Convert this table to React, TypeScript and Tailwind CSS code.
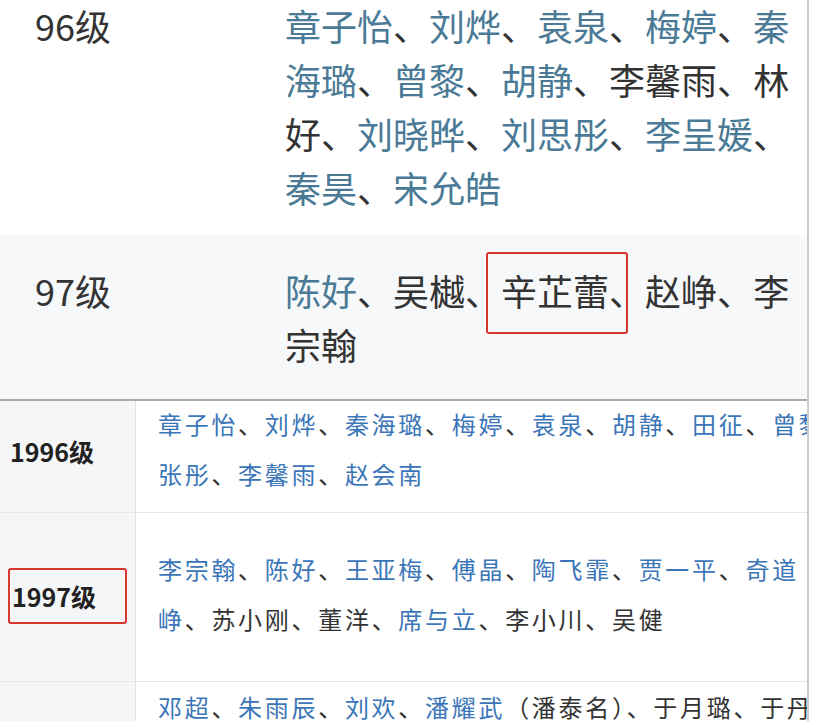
import React from "react";

const L = ({ children }: { children: React.ReactNode }) => (
  <span className="text-[#4a7a96]">{children}</span>
);
const B = ({ children }: { children: React.ReactNode }) => (
  <span className="text-[#3b76b8]">{children}</span>
);
const S = "、";

export default function App() {
  return (
    <div
      className="w-[814px] h-[721px] overflow-hidden bg-white text-[#333]"
      style={{ fontFamily: '"Noto Sans CJK SC", "Noto Sans", sans-serif' }}
    >
      <div className="w-[809px] h-[721px] border-r-2 border-[#cdcdcd] overflow-hidden">
        {/* 96 row */}
        <div className="flex bg-white mt-[-2px] pt-0 pb-[21px] text-[36px] leading-[54px]">
          <div className="w-[285px] shrink-0 pl-[35px]">96级</div>
          <div className="w-[522px]">
            <L>章子怡</L>{S}<L>刘烨</L>{S}<L>袁泉</L>{S}<L>梅婷</L>{S}<L>秦海璐</L>{S}
            <L>曾黎</L>{S}<L>胡静</L>{S}李馨雨{S}林好{S}<L>刘晓晔</L>{S}<L>刘思彤</L>{S}
            <L>李呈媛</L>{S}<L>秦昊</L>{S}<L>宋允皓</L>
          </div>
        </div>
        {/* 97 row */}
        <div className="flex bg-[#f7f8fa] pt-[28px] pb-[28px] text-[36px] leading-[54px]">
          <div className="w-[285px] shrink-0 pl-[35px]">97级</div>
          <div className="w-[522px]">
            <L>陈好</L>{S}吴樾{S}
            <span className="relative">
              辛芷蕾{S}
              <span className="absolute left-[-15px] top-[-12px] w-[142px] h-[82px] border-2 border-[#d8372d] rounded-[3px]" />
            </span>
            赵峥{S}李宗翰
          </div>
        </div>
        {/* bottom table */}
        <div className="border-t-2 border-[#a9a9a9] text-[24px] leading-[50px] tracking-[2.7px]">
          <div className="flex border-b border-[#e6e6e6]">
            <div className="w-[136px] shrink-0 bg-[#f5f6f7] border-r border-[#e3e3e3] flex items-center pl-[10px] pb-[12px] font-bold text-[25px] tracking-[0px] text-[#222]">
              1996级
            </div>
            <div className="flex-1 overflow-hidden pl-[22px] pt-0 pb-[13px] whitespace-nowrap">
              <div className="mt-[-2px]">
                <B>章子怡</B>{S}<B>刘烨</B>{S}<B>秦海璐</B>{S}<B>梅婷</B>{S}<B>袁泉</B>{S}<B>胡静</B>{S}<B>田征</B>{S}<B>曾黎</B>{S}
              </div>
              <div>
                <B>张彤</B>{S}<B>李馨雨</B>{S}<B>赵会南</B>
              </div>
            </div>
          </div>
          <div className="flex border-b border-[#e6e6e6]">
            <div className="relative w-[136px] shrink-0 bg-[#f5f6f7] border-r border-[#e3e3e3] flex items-center pl-[12px] pb-[2px] font-bold text-[25px] tracking-[0px] text-[#222]">
              1997级
              <span className="absolute left-[8px] top-[55px] w-[119px] h-[56px] border-2 border-[#d8372d] rounded-[3px]" />
            </div>
            <div className="flex-1 overflow-hidden pl-[22px] pt-[31px] pb-[37px] whitespace-nowrap">
              <div>
                <B>李宗翰</B>{S}<B>陈好</B>{S}<B>王亚梅</B>{S}<B>傅晶</B>{S}<B>陶飞霏</B>{S}<B>贾一平</B>{S}<B>奇道</B>
              </div>
              <div>
                <B>峥</B>{S}苏小刚{S}董洋{S}<B>席与立</B>{S}李小川{S}吴健
              </div>
            </div>
          </div>
          <div className="flex">
            <div className="w-[136px] shrink-0 bg-[#f5f6f7] border-r border-[#e3e3e3] h-[60px]" />
            <div className="flex-1 overflow-hidden pl-[22px] pt-0 whitespace-nowrap">
              <B>邓超</B>{S}<B>朱雨辰</B>{S}<B>刘欢</B>{S}<B>潘耀武</B>（潘泰名）{S}于月璐{S}于丹
            </div>
          </div>
        </div>
      </div>
    </div>
  );
}
